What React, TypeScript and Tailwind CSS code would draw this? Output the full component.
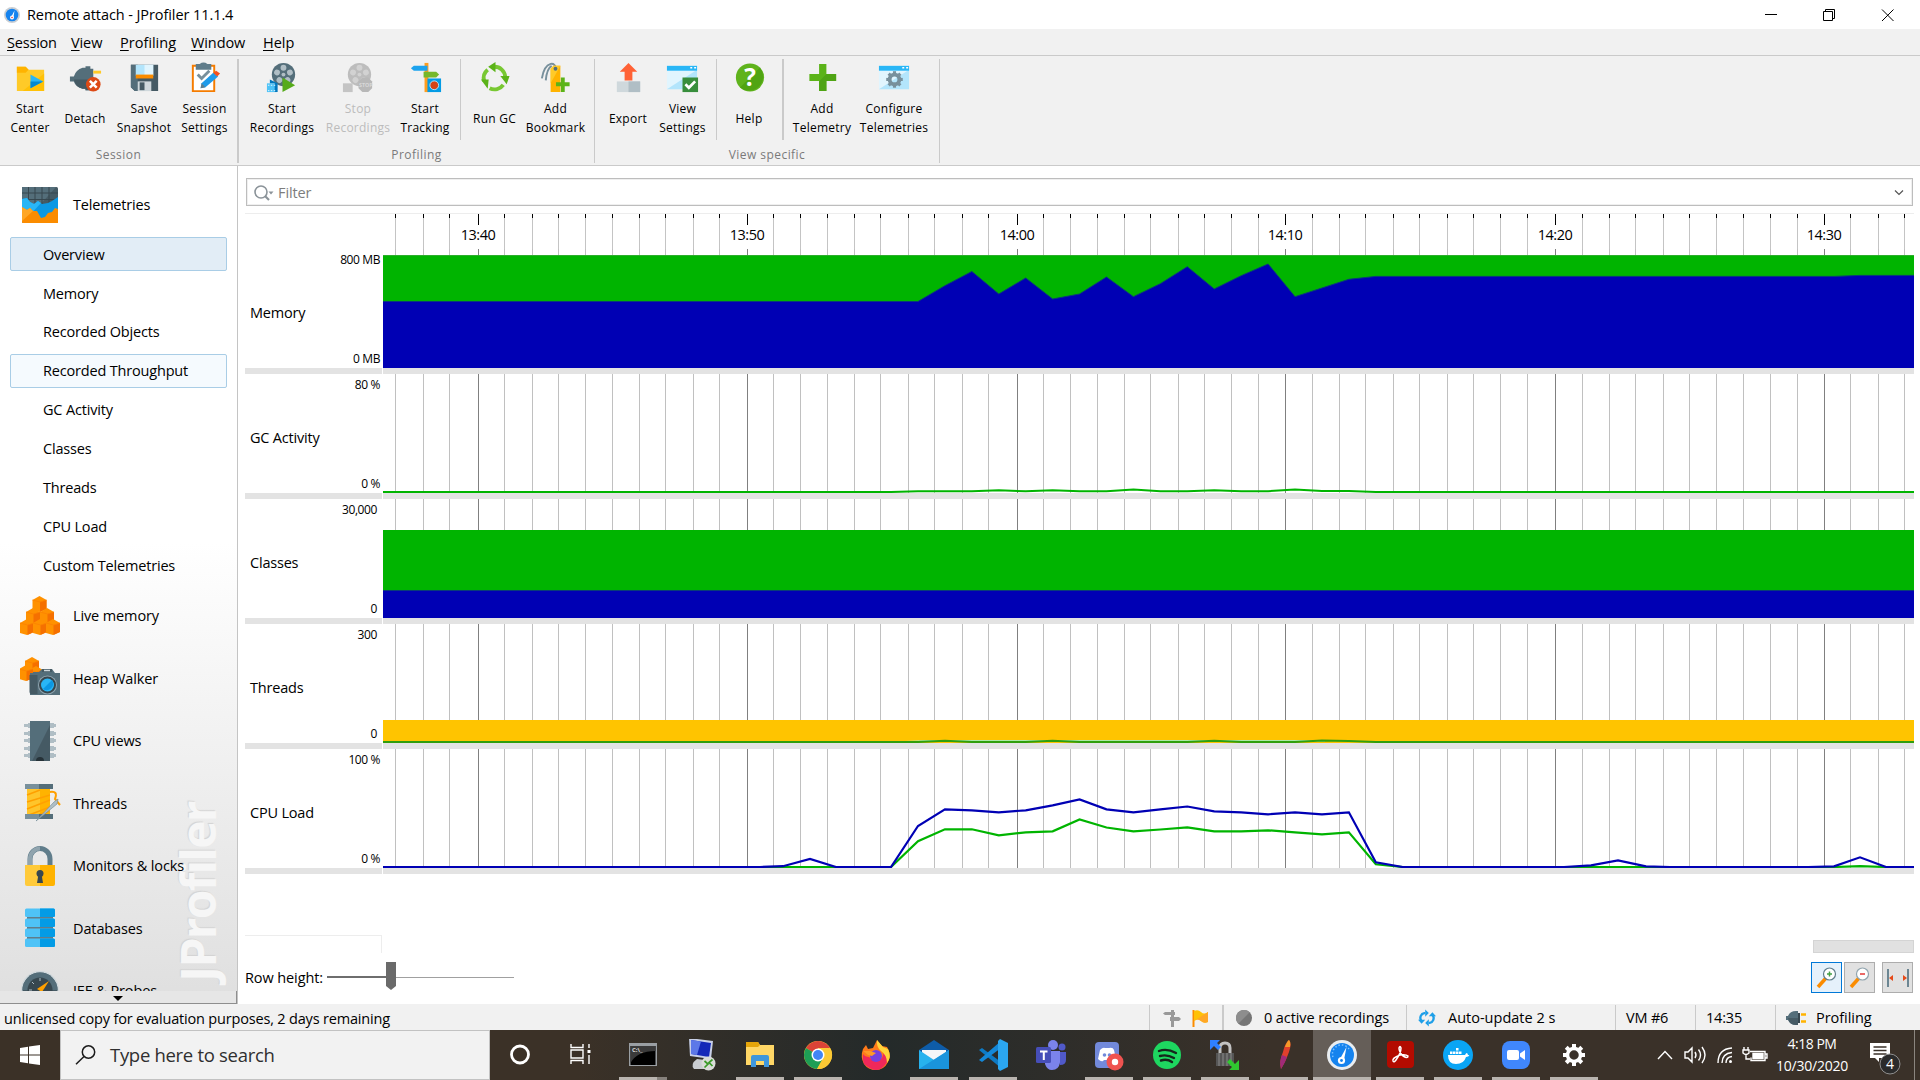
import React from "react";

type Pt = [number, number];

const GRID = [
  395, 423, 449, 478, 504, 532, 558, 585, 612, 639, 665, 693, 719, 747, 773, 800, 827, 854, 880, 908, 934, 962, 988,
  1017, 1043, 1070, 1097, 1124, 1150, 1178, 1204, 1231, 1258, 1285, 1312, 1339, 1365, 1393, 1419, 1447, 1473, 1500,
  1527, 1555, 1582, 1609, 1635, 1663, 1689, 1716, 1743, 1770, 1797, 1824, 1850, 1878, 1904,
];
const MAJOR: Record<number, string> = {
  478: "13:40",
  747: "13:50",
  1017: "14:00",
  1285: "14:10",
  1555: "14:20",
  1824: "14:30",
};

/** x coordinate of the i-th sample, counted from the start of the load phase */
const sx = (i: number) => 918 + 26.93 * i;
const line = (pts: Pt[]) => pts.map((p) => p.join(",")).join(" ");
const samples = (ys: number[], from = 0): Pt[] => ys.map((y, i) => [sx(from + i), y]);

const memory: Pt[] = [
  [383, 301.5],
  ...samples([301.5, 285.7, 271.5, 294, 278, 299, 294, 277, 296.7, 283.7, 266.7, 289, 275.7, 264, 296.7, 288, 279.3, 276.4]),
  [1834, 276.4],
  [1860, 275.4],
  [1914, 275.4],
];
const gc: Pt[] = [
  [383, 492],
  [891, 492],
  ...samples([491.2, 491.2, 491.2, 490.2, 491.3, 490.3, 491.3, 491.3, 489.5, 491.2, 491.2, 490.3, 491.2, 491.2, 489.4, 491, 491, 492]),
  [1914, 492],
];
const netIo: Pt[] = [[905, 741.5], [925, 740.6], [1305, 740.6], [1325, 741.5]];
const threads: Pt[] = [
  [383, 742],
  [891, 742],
  ...samples([742, 740.8, 742, 742, 742, 740.8, 742, 742, 742, 742, 742, 740.8, 742, 742, 742, 740.6, 741, 742]),
  [1914, 742],
];
const cpuBlue: Pt[] = [
  [383, 867],
  [760, 867],
  [783, 866.2],
  [810, 859],
  [836, 867],
  [891, 867],
  ...samples([826, 809.3, 810.3, 812.3, 810.3, 805.3, 799.5, 809.3, 812.3, 809.3, 806.5, 811.3, 812.3, 814.3, 812.3, 814.3, 812.3, 862.3, 867]),
  [1564, 867],
  [1591, 865.3],
  [1618, 860.3],
  [1646, 866.3],
  [1670, 867],
  [1808, 867],
  [1834, 866.3],
  [1860, 857.3],
  [1886, 867],
  [1914, 867],
];
const cpuGreen: Pt[] = [
  [383, 867],
  [891, 867],
  ...samples([841.3, 829.3, 829.3, 835.3, 832.3, 831.3, 819.5, 827.5, 831.3, 829.5, 827.3, 831.3, 831.3, 830.3, 832.3, 834.3, 832.3, 864.3, 867]),
  [1834, 867],
  [1860, 866.2],
  [1886, 867],
  [1914, 867],
];

function Grid({ y }: { y: number }) {
  return (
    <g shapeRendering="crispEdges">
      {GRID.map((x) => (
        <rect key={x} x={x} y={y} width={1} height={119} fill={MAJOR[x] ? "#808080" : "#c0c0c0"} />
      ))}
    </g>
  );
}

function Row({ name, max, min, y, num, children }: { name: string; max: string; min: string; y: number; num?: boolean; children: React.ReactNode }) {
  return (
    <div className="flex h-[125px]">
      <div className="mr-px flex w-[137px] flex-col border-b-[6px] border-[#e3e3e3]">
        <div className="flex h-full items-stretch justify-between pl-[5px]">
          <span className="self-center pt-[9px] text-[14.5px] leading-5 tracking-[-0.2px]">{name}</span>
          <span className={`flex flex-col justify-between whitespace-nowrap pt-[2px] text-right text-[12px] leading-[18px] tracking-[-0.4px] ${num ? "pr-[5px]" : "pr-[2px]"}`}>
            <span>{max}</span>
            <span>{min}</span>
          </span>
        </div>
      </div>
      <div className="w-[1531px] border-b-[6px] border-[#e3e3e3]">
        <svg className="block h-[119px] w-[1531px]" viewBox={`383 ${y} 1531 119`}>
          <Grid y={y} />
          {children}
        </svg>
      </div>
    </div>
  );
}

/* ---------- ribbon ---------- */

function Ribbon({ w, lines, off, children }: { w: string; lines: string[]; off?: boolean; children: React.ReactNode }) {
  return (
    <div className={`flex shrink-0 flex-col items-center ${w} ${off ? "text-[#bcbcbc]" : "text-black"}`}>
      <svg className="block h-[35px] w-[35px]" viewBox="0 0 36 36">
        {children}
      </svg>
      <div className="flex h-[46px] flex-col justify-center whitespace-nowrap text-center text-[12px] leading-[19px] tracking-[0.25px]">
        {lines.map((l) => (
          <div key={l}>{l}</div>
        ))}
      </div>
    </div>
  );
}

const Sep = ({ c }: { c: string }) => <div className={`shrink-0 bg-[#cacaca] ${c}`} />;

function Reel({ c, d }: { c: string; d: string }) {
  return (
    <>
      <circle cx="19" cy="15" r="12" fill={c} />
      {[0, 72, 144, 216, 288].map((a) => (
        <circle key={a} cx="19" cy="8" r="3" fill={d} transform={`rotate(${a} 19 15)`} />
      ))}
      <circle cx="19" cy="15" r="2" fill={d} />
    </>
  );
}

function WindowIcon() {
  return (
    <>
      <rect x="2" y="6" width="31" height="24" fill="#e1f5fe" />
      <path d="M33 10V30H2Z" fill="#b3e5fc" />
      <rect x="2" y="6" width="31" height="5" fill="#29b6f6" />
      <path d="M26 8h2M30 8h2" stroke="#fff" strokeWidth="1.6" />
    </>
  );
}

/* ---------- side bar ---------- */

function Cube({ x, y }: { x: number; y: number }) {
  return (
    <g transform={`translate(${x} ${y})`}>
      <path d="M0 4 7 0l7 4v9l-7 3-7-2z" fill="#ff9100" />
      <path d="M7.500 6 14 4v9l-6.500 3z" fill="#f57000" />
      <path d="M0 4l7.500 2L14 4" stroke="#fb8200" strokeWidth="0.800" fill="none" />
    </g>
  );
}

function Section({ label, children }: { label: string; children: React.ReactNode }) {
  return (
    <div className="flex h-[62.5px] shrink-0 items-center pl-[20px]">
      <svg className="h-[42px] w-[42px]" viewBox="0 0 42 42">
        {children}
      </svg>
      <span className="ml-[11px] whitespace-nowrap pt-[1px] text-[14.5px] leading-5 tracking-[-0.12px]">{label}</span>
    </div>
  );
}

const views = ["Overview", "Memory", "Recorded Objects", "Recorded Throughput", "GC Activity", "Classes", "Threads", "CPU Load", "Custom Telemetries"];

function SideBar() {
  return (
    <aside className="relative flex w-[238px] flex-col border-r border-[#c4c4c4] bg-linear-to-b from-white from-45% to-[#dfdfdf]">
      <div className="absolute bottom-[16px] left-[170px] flex h-[192px] w-[56px] items-center justify-center">
        <span className="-rotate-90 whitespace-nowrap text-[48px] font-bold leading-none tracking-[-1.8px] text-[#f6f6f6] [text-shadow:1px_-1px_1px_#d3d3d3]">JProfiler</span>
      </div>
      <div className="relative flex h-[825px] flex-col overflow-hidden">
        <div className="mt-[7px] flex h-[64px] shrink-0 items-center pl-[22px]">
          <svg className="h-9 w-9" viewBox="0 0 36 36">
            <rect width="36" height="36" rx="1.500" fill="#455a64" />
            <path d="M0 0H34L18 18H0Z" fill="#546e7a" />
            <path d="M0 6h36M0 12.500h36M6.500 0v20M13 0v20M20 0v20M27 0v20" stroke="#37474f" />
            <path d="M0 12l5-1 3 4 4 2 4-3 4 3 6-1 4-2 6-4v25H0z" fill="#0c98e4" />
            <path d="M0 12l5-1 3 4 4 2 4-3 3 2L7 29H0z" fill="#29b6f6" />
            <path d="M0 20l5 3 3-2 3 3 4 0 4 7 4-1 3-4 4-1 3-4 3 1v13.500q0 1.500-1.500 1.500h-33Q0 36 0 34.500z" fill="#fb8c00" />
            <path d="M0 20l5 3 3-2 3 3L0 34z" fill="#ffa726" />
          </svg>
          <span className="ml-[15px] text-[14.5px] leading-5 tracking-[-0.2px]">Telemetries</span>
        </div>
        <div className="flex shrink-0 flex-col gap-[4.9px] px-[10px]">
          {views.map((v, i) => (
            <div
              key={v}
              className={`flex h-[34px] items-center whitespace-nowrap rounded-[2px] border pl-[32px] pt-[1px] text-[14.5px] tracking-[-0.18px] ${
                i === 0 ? "border-[#a9cde6] bg-[#e2edf6]" : i === 3 ? "border-[#a9cde6] bg-[#f5fafe]" : "border-transparent"
              }`}
            >
              {v}
            </div>
          ))}
        </div>
        <div className="h-[2.5px] shrink-0" />
        <Section label="Live memory">
          <Cube x={12.500} y={1} />
          <Cube x={6} y={13} />
          <Cube x={20} y={13} />
          <Cube x={0} y={24} />
          <Cube x={13} y={24} />
          <Cube x={26} y={24} />
        </Section>
        <Section label="Heap Walker">
          <Cube x={5} y={0} />
          <Cube x={9} y={9} />
          <Cube x={-1} y={8} />
          <path d="M10 16h3v-1h6l3-3h10l3 4h5v22H10z" fill="#546e7a" />
          <path d="M22 12h10v3H22z" fill="#455a64" />
          <path d="M24 13.500h6" stroke="#cfd8dc" strokeWidth="1.500" />
          <path d="M9.500 18h8v19h-6q-2 0-2-2z" fill="#455a64" />
          <circle cx="27.500" cy="28" r="9.500" fill="#90a4ae" />
          <circle cx="27.500" cy="28" r="8.500" fill="#37474f" />
          <circle cx="27.500" cy="28" r="6.500" fill="#29b6f6" />
          <path d="M32 23a6.500 6.500 0 0 1-9 9z" fill="#0c98e4" />
        </Section>
        <Section label="CPU views">
          {[4, 12, 19, 27, 34].map((y) => (
            <path key={y} d={`M4 ${y}h4v-1h26v1h2v3h-2v1H8v-1H4z`} fill="#b0bec5" />
          ))}
          <rect x="10" y="1" width="20" height="40" fill="#546e7a" />
          <path d="M30 5v36H12z" fill="#455a64" />
          <path d="M16 41a4 4 0 0 1 8 0z" fill="#263238" />
        </Section>
        <Section label="Threads">
          <path d="M7 6h23v29H7z" fill="#ffc52b" />
          <path d="M20 6h10v29H20z" fill="#ffb300" />
          <path d="M7 13l13-5M7 20l23-7M7 27l23-9M9 33l21-8M15 34l14-5" stroke="#ffa000" strokeWidth="1.500" />
          <path d="M5 2h28v5H5z" fill="#78909c" />
          <path d="M19 2h14v5H19zM19 32h14v5H19z" fill="#546e7a" />
          <path d="M5 32h14v5H5z" fill="#78909c" />
          <path d="M30 10c8-1 6 4 5 7l5 6" stroke="#ffa000" strokeWidth="2" fill="none" />
          <path d="M16 39L34 20l4-3-1 5z" fill="#b0bec5" stroke="#78909c" strokeWidth="0.700" />
        </Section>
        <Section label="Monitors & locks">
          <path d="M10 22V14a10 10.500 0 0 1 20 0v8" stroke="#607d8b" strokeWidth="5" fill="none" />
          <path d="M10 22V14a10 10.500 0 0 1 10-10.500" stroke="#90a4ae" strokeWidth="4" fill="none" />
          <path d="M5 20h15v21H7q-2 0-2-2z" fill="#ffca3a" />
          <path d="M20 20h15v19q0 2-2 2H20z" fill="#ffb300" />
          <circle cx="20" cy="28.500" r="3.500" fill="#37474f" />
          <path d="M18.500 29h3l1.500 9h-6z" fill="#37474f" />
        </Section>
        <Section label="Databases">
          <rect x="7" y="3" width="26" height="36" fill="#607d8b" />
          {[1.500, 11.500, 21.500, 31.500].map((y) => (
            <g key={y}>
              <rect x="5" y={y} width="30" height="8.500" rx="1.500" fill="#4fc3f7" />
              <path d={`M20 ${y}h13.500q1.500 0 1.500 1.500v5.500q0 1.500-1.500 1.500H20z`} fill="#039be5" />
            </g>
          ))}
        </Section>
        <Section label="JEE & Probes">
          <circle cx="20" cy="20" r="19" fill="#cfd8dc" />
          <circle cx="20" cy="20" r="17.500" fill="#455a64" />
          <path d="M2.500 20a17.500 17.500 0 0 1 35 0z" fill="#546e7a" />
          <circle cx="20" cy="20" r="12.500" fill="#37474f" />
          <path d="M9 20h3M20 8v3M12 12l2 2" stroke="#b0bec5" />
          <path d="M17 19l12-8-7 11z" fill="#ffa000" />
        </Section>
      </div>
      <div className="flex h-[13px] w-[237px] items-center justify-center border-b border-r border-[#8e8e8e] bg-[#e6e6e6]">
        <svg className="mt-1 h-[6px] w-[10px]" viewBox="0 0 10 6">
          <path d="M0 0h10L5 5z" fill="#000" />
        </svg>
      </div>
    </aside>
  );
}

function ToolButton({ on, children }: { on?: boolean; children: React.ReactNode }) {
  return (
    <div className={`flex h-[31px] w-[31px] items-center justify-center border ${on ? "border-[#0078d7] bg-[#e5f1fb]" : "border-[#adadad] bg-[#e1e1e1]"}`}>
      <svg className="h-6 w-6 shrink-0" viewBox="0 0 24 24">
        {children}
      </svg>
    </div>
  );
}

/* ---------- task bar ---------- */

function Task({ run, active, more, children }: { run?: boolean; active?: boolean; more?: boolean; children: React.ReactNode }) {
  return (
    <div className={`flex h-[50px] w-[58.2px] shrink-0 flex-col items-center justify-end ${active ? "bg-[#655e58]" : ""}`}>
      <svg className="mb-[6px] h-[32px] w-[32px]" viewBox="0 0 32 32">
        {children}
      </svg>
      <div className={`flex h-[3px] ${active ? "w-full" : "w-[48px]"} ${run || active ? "bg-[#b9b4af]" : ""} justify-end`}>{more && <div className="h-[3px] w-[10px] bg-[#86817c]" />}</div>
    </div>
  );
}

const gearTeeth = [0, 45, 90, 135, 180, 225, 270, 315];

export default function App() {
  return (
    <div className="flex h-[1080px] w-[1920px] flex-col overflow-hidden bg-white font-['Open_Sans','Noto_Sans',sans-serif] text-black">
      {/* title bar */}
      <header className="flex h-[29px] shrink-0 items-center pl-[4px]">
        <svg className="h-4 w-4" viewBox="0 0 16 16">
          <circle cx="8" cy="8" r="8" fill="#c9ced3" />
          <circle cx="8" cy="8" r="6.300" fill="#1583ee" />
          <path d="M10.500 3.500 9.500 10l-2.500.5z" fill="#fff" />
          <circle cx="8" cy="10.500" r="2" fill="#fff" />
          <circle cx="8" cy="10.500" r="0.800" fill="#e53935" />
        </svg>
        <span className="ml-[7px] text-[14.5px] tracking-[-0.08px]">Remote attach - JProfiler 11.1.4</span>
        <svg className="ml-auto mr-[24px] h-[14px] w-[132px]" viewBox="0 0 132 14" fill="none" stroke="#000">
          <path d="M1 6.500h12" />
          <path d="M59.500 3.500h9v9h-9zM61.500 3.500v-2h9v9h-2" />
          <path d="M118 1.500l11.500 11.500M129.500 1.500L118 13" />
        </svg>
      </header>

      {/* menu */}
      <nav className="flex h-[27px] shrink-0 items-center border-b border-[#cacaca] bg-[#f1f1f1] pt-[1px] text-[14.5px]">
        <span className="w-[64px] pl-[7px] tracking-[-0.2px]"><u className="underline-offset-2">S</u>ession</span>
        <span className="w-[49px] pl-[7px] tracking-[-0.1px]"><u className="underline-offset-2">V</u>iew</span>
        <span className="w-[71px] pl-[7px] tracking-[0px]"><u className="underline-offset-2">P</u>rofiling</span>
        <span className="w-[72px] pl-[7px] tracking-[-0.1px]"><u className="underline-offset-2">W</u>indow</span>
        <span className="pl-[7px] tracking-[0px]"><u className="underline-offset-2">H</u>elp</span>
      </nav>

      {/* ribbon */}
      <div className="flex h-[110px] shrink-0 border-b border-[#cacaca] bg-[#f1f1f1] pt-[3px]">
        <div className="flex w-[237px] flex-col">
          <div className="flex pt-[1px]">
            <Ribbon w="w-[60px]" lines={["Start", "Center"]}>
              <path d="M4 7h9l3 3h16v22H4z" fill="#ffca28" />
              <path d="M4 7h9l3 3-3 3H4z" fill="#ffb300" />
              <path d="M32 14v18H10z" fill="#ffc107" />
              <path d="M18 15v14l13-7z" fill="#29b6f6" />
              <path d="M18 22v7l13-7z" fill="#0288d1" />
            </Ribbon>
            <Ribbon w="w-[50px]" lines={["Detach"]}>
              <path d="M2 17h4q2-7 9-9h3V6.500h5V9h3v21h-3v1h-5v-1.500h-3Q8 28 6 22H2z" fill="#546e7a" />
              <path d="M6 20h20v10h-3v1h-5v-1.500h-3Q8 28 6 20z" fill="#455a64" />
              <path d="M26 12.500h8" stroke="#ffca28" strokeWidth="3" />
              <circle cx="26" cy="25" r="7.500" fill="#dd4a16" />
              <path d="M22.500 21.500l7 7m0-7l-7 7" stroke="#fff" strokeWidth="2.600" />
            </Ribbon>
            <Ribbon w="w-[68px]" lines={["Save", "Snapshot"]}>
              <path d="M4 5h28v27H8l-4-4z" fill="#455a64" />
              <path d="M4 5h7v27H8l-4-4z" fill="#546e7a" />
              <path d="M9 5h18v11H9z" fill="#b3e5fc" />
              <path d="M18 5h9v11h-9z" fill="#e1f5fe" />
              <path d="M9 15h18v4H9z" fill="#fb8c00" />
              <path d="M11 22h14v10H11z" fill="#cfd8dc" />
              <path d="M13 23h5v8h-5z" fill="#455a64" />
            </Ribbon>
            <Ribbon w="w-[53px]" lines={["Session", "Settings"]}>
              <path d="M6 6h22v26H6z" fill="#fff" stroke="#f57c00" strokeWidth="2" />
              <path d="M9 4h4q4-3 8 0h4v6H9z" fill="#607d8b" />
              <path d="M11 15l4 4 8-8" stroke="#78909c" strokeWidth="3" fill="none" />
              <path d="M15 24L27 13l5 4-13 11-5 1z" fill="#1e9bea" />
              <path d="M27 13l3-2 4 3-3 3z" fill="#f4511e" />
              <path d="M14 29l1-5 4 4z" fill="#607d8b" />
            </Ribbon>
          </div>
          <div className="mt-[6px] text-center text-[12px] leading-[16px] tracking-[0.45px] text-[#7a7a7a]">Session</div>
        </div>
        <Sep c="h-[104px] w-[2px]" />
        <div className="flex w-[355px] flex-col">
          <div className="flex pl-[5px]">
            <div className="flex pt-[1px]">
              <Ribbon w="w-[76px]" lines={["Start", "Recordings"]}>
                <Reel c="#546e7a" d="#b0bec5" />
                <path d="M2 24h10v9H2z" fill="#4fc3f7" />
                <path d="M5 20l8 4v9h-3v-9H5z" fill="#0277bd" />
                <path d="M3 26h9M3 31.500h9" stroke="#e1f5fe" strokeDasharray="1.500 1.500" />
                <path d="M18 18v15l13-7z" fill="#56ab1a" />
              </Ribbon>
              <Ribbon w="w-[76px]" lines={["Stop", "Recordings"]} off>
                <Reel c="#bdbdbd" d="#d2d2d2" />
                <path d="M2 24h10v9H2z" fill="#c4c4c4" />
                <path d="M22 18h6l4 4v7l-4 4h-6l-4-4v-7z" fill="#b8b8b8" />
                <text x="18.500" y="28" fontSize="5.500" fontWeight="700" fill="#d8d8d8">STOP</text>
              </Ribbon>
              <Ribbon w="w-[58px]" lines={["Start", "Tracking"]}>
                <path d="M17 3h4v30h-4z" fill="#ff9d1e" />
                <path d="M6 6h14v5H6L3 8.500z" fill="#1da3ee" />
                <path d="M16 12h13l3 3-3 3H16z" fill="#76b82a" />
                <rect x="20" y="19" width="14" height="14" fill="#039be5" />
                <circle cx="27" cy="26" r="4.500" fill="#d84315" stroke="#b3e5fc" />
              </Ribbon>
            </div>
            <div className="w-[6px] shrink-0" />
            <Sep c="h-[81px] w-px" />
            <div className="flex pl-[5px] pt-[1px]">
              <Ribbon w="w-[57px]" lines={["Run GC"]}>
                <g fill="none" stroke="#78c832" strokeWidth="4">
                  <path d="M18 7a11 11 0 0 1 11 10" />
                  <path d="M27 25.500a11 11 0 0 1-14 3.500" />
                  <path d="M7.500 22A11 11 0 0 1 11 10" />
                </g>
                <path d="M19 2v10.500L11.500 7z" fill="#5bb318" />
                <path d="M24 16.500h9.500L30.500 25z" fill="#5bb318" />
                <path d="M4 20l8 0-1 9.500z" fill="#5bb318" />
              </Ribbon>
              <Ribbon w="w-[65px]" lines={["Add", "Bookmark"]}>
                <path d="M4 19q2-13 9-15 4-1 6 5M8 21q1-12 6-15" stroke="#78909c" strokeWidth="2" fill="none" />
                <path d="M13 9l3-3h7v27H13z" fill="#ffb300" />
                <path d="M13 9l3-3h7L13 24z" fill="#ffca28" />
                <circle cx="18" cy="9" r="2" fill="#546e7a" />
                <path d="M23.500 18h4v5h5v4h-5v6h-4v-6h-5v-4h5z" fill="#5bb318" />
              </Ribbon>
            </div>
          </div>
          <div className="mt-[6px] text-center text-[12px] leading-[16px] tracking-[0.45px] text-[#7a7a7a]">Profiling</div>
        </div>
        <Sep c="h-[104px] w-px" />
        <div className="flex w-[344px] flex-col">
          <div className="flex pl-[5px]">
            <div className="flex pt-[1px]">
              <Ribbon w="w-[56px]" lines={["Export"]}>
                <path d="M6 22h24v11H6z" fill="#cfd8dc" />
                <path d="M18 22h12v11H18z" fill="#b0bec5" />
                <path d="M18 3l9 9h-5v9h-8v-9H9z" fill="#ff6236" />
              </Ribbon>
              <Ribbon w="w-[53px]" lines={["View", "Settings"]}>
                <WindowIcon />
                <rect x="18" y="18" width="16" height="15" fill="#388e3c" />
                <path d="M21 25l3.500 3.500L31 22" stroke="#fff" strokeWidth="2.800" fill="none" />
              </Ribbon>
            </div>
            <div className="w-[7px] shrink-0" />
            <Sep c="h-[81px] w-px" />
            <div className="flex pl-[5px] pt-[1px]">
              <Ribbon w="w-[54px]" lines={["Help"]}>
                <circle cx="18.500" cy="18" r="14.500" fill="#5fb31c" />
                <path d="M28.700 7.800a14.500 14.500 0 0 1-20.400 20.400z" fill="#50a412" />
                <text x="18.500" y="27" textAnchor="middle" fontSize="25" fontWeight="700" fill="#fff">?</text>
              </Ribbon>
            </div>
            <div className="w-[6px] shrink-0" />
            <Sep c="h-[81px] w-[2px]" />
            <div className="flex pl-[5px] pt-[1px]">
              <Ribbon w="w-[66px]" lines={["Add", "Telemetry"]}>
                <path d="M14.500 4h7.500v10.500H32v7H22v10.500h-7.500V21.500H4.500v-7h10z" fill="#5bb318" />
                <path d="M22 14.500H32v7H22v10.500h-7.500V22z" fill="#4fa414" />
              </Ribbon>
              <Ribbon w="w-[78px]" lines={["Configure", "Telemetries"]}>
                <WindowIcon />
                <circle cx="18" cy="20" r="5" fill="none" stroke="#78909c" strokeWidth="4" />
                {gearTeeth.map((a) => (
                  <rect key={a} x="16.400" y="11.500" width="3.200" height="4" fill="#78909c" transform={`rotate(${a} 18 20)`} />
                ))}
              </Ribbon>
            </div>
          </div>
          <div className="mt-[6px] text-center text-[12px] leading-[16px] tracking-[0.45px] text-[#7a7a7a]">View specific</div>
        </div>
        <Sep c="h-[104px] w-px" />
      </div>

      {/* body */}
      <div className="flex h-[838px] shrink-0">
        <SideBar />
        <main className="flex w-[1682px] flex-col pl-[7px]">
          <div className="ml-px mt-[12px] flex h-[28px] w-[1667px] items-center border border-[#bdbdbd] pl-[6px] pr-[8px] pt-[1px] shadow-[inset_0_0_0_1px_#efefef]">
            <svg className="h-[18px] w-[22px]" viewBox="0 0 22 18" fill="none" stroke="#8b9399" strokeWidth="1.600">
              <circle cx="8" cy="8" r="6" />
              <path d="M12 12l4 4" strokeWidth="2.200" />
              <path d="M15.500 7.500h5l-2.500 3z" fill="#8b9399" stroke="none" />
            </svg>
            <span className="ml-[3px] text-[14.5px] tracking-[-0.1px] text-[#7d7d7d]">Filter</span>
            <svg className="ml-auto h-[8px] w-[10px]" viewBox="0 0 10 8">
              <path d="M1 1.500l4 4 4-4" stroke="#555" strokeWidth="1.200" fill="none" />
            </svg>
          </div>
          <div className="mt-[7px] h-px w-[1669px] bg-[#ededed]" />
          <svg className="ml-[138px] block h-[35px] w-[1531px] shrink-0" viewBox="383 214 1531 35">
            {GRID.map((x) => (
              <g key={x} shapeRendering="crispEdges">
                <rect x={x} y={214} width={1} height={MAJOR[x] ? 11 : 4} fill="#000" />
                {!MAJOR[x] && <rect x={x} y={218} width={1} height={31} fill="#c4c4c4" />}
              </g>
            ))}
            {Object.entries(MAJOR).map(([x, t]) => (
              <text key={t} x={Number(x)} y={240} textAnchor="middle" fontSize="14.500" letterSpacing="-0.500">
                {t}
              </text>
            ))}
          </svg>

          <Row name="Memory" max="800 MB" min="0 MB" y={249}>
            <rect x="383" y="255" width="1531" height="113" fill="#00b400" />
            <rect x="383" y="255" width="1531" height="1" fill="#2cae2c" />
            <polygon points={`${line(memory)} 1914,368 383,368`} fill="#0000b4" />
            <polyline points={line(memory)} fill="none" stroke="#0a3c78" strokeWidth="1" />
          </Row>
          <Row name="GC Activity" max="80 %" min="0 %" y={374}>
            <polyline points={line(gc)} fill="none" stroke="#00b400" strokeWidth="2" />
          </Row>
          <Row name="Classes" max="30,000" min="0" y={499} num>
            <rect x="383" y="530" width="1531" height="60" fill="#00b400" />
            <rect x="383" y="590" width="1531" height="28" fill="#0000b4" />
            <rect x="383" y="590" width="1531" height="1" fill="#0a3c78" />
          </Row>
          <Row name="Threads" max="300" min="0" y={624} num>
            <rect x="383" y="720" width="1531" height="23" fill="#ffc400" />
            <polyline points={line(netIo)} fill="none" stroke="#a4eeb4" strokeWidth="1" />
            <polyline points={line(threads)} fill="none" stroke="#2f9e0c" strokeWidth="2" />
          </Row>
          <Row name="CPU Load" max="100 %" min="0 %" y={749}>
            <polyline points={line(cpuGreen)} fill="none" stroke="#00b400" strokeWidth="2.200" />
            <polyline points={line(cpuBlue)} fill="none" stroke="#0000b4" strokeWidth="2.200" />
          </Row>

          <div className="mt-[61px] flex w-[1669px] items-end justify-between">
            <div className="h-[18px] w-[137px] border-r border-t border-[#ededed]" />
            <div className="h-[13px] w-[101px] border border-[#d4d4d4] bg-[#e1e1e1]" />
          </div>
          <div className="mt-[9px] flex h-[31px] w-[1669px] items-center">
            <span className="w-[82px] whitespace-nowrap text-[14.5px] leading-5 tracking-[-0.1px]">Row height:</span>
            <svg className="h-[31px] w-[188px]" viewBox="0 0 188 31">
              <path d="M0 15h60" stroke="#6e6e6e" strokeWidth="2" />
              <path d="M69 15.500h118" stroke="#a0a0a0" strokeWidth="1" />
              <path d="M59 0h10v24l-5 4-5-4z" fill="#6a6a6a" />
            </svg>
            <div className="ml-auto mr-px flex">
              <ToolButton on>
                <path d="M3 21L11 12" stroke="#fb8c00" strokeWidth="3.500" />
                <circle cx="14.500" cy="8" r="6" fill="#fff" stroke="#607d8b" strokeWidth="1.200" />
                <path d="M12 8h5M14.500 5.500v5" stroke="#43a047" strokeWidth="1.500" />
              </ToolButton>
              <div className="w-[2px]" />
              <ToolButton>
                <path d="M3 21L11 12" stroke="#fb8c00" strokeWidth="3.500" />
                <circle cx="14.500" cy="8" r="6" fill="#fff" stroke="#90a4ae" strokeWidth="1.200" />
                <path d="M12 8h5" stroke="#e53935" strokeWidth="1.500" />
              </ToolButton>
              <div className="w-[7px]" />
              <ToolButton>
                <path d="M2 3v18M22 3v18" stroke="#607d8b" strokeWidth="1.800" />
                <path d="M3 12l4-3v6zM21 12l-4-3v6z" fill="#e64a19" />
              </ToolButton>
            </div>
          </div>
        </main>
      </div>

      {/* status bar */}
      <div className="flex h-[26px] shrink-0 items-center bg-[#f1f1f1] text-[14.5px] leading-5 tracking-[-0.18px]">
        <span className="w-[1149px] pl-[4px] pt-[3px]">unlicensed copy for evaluation purposes, 2 days remaining</span>
        <div className="flex h-[25px] w-[73px] items-center border-l border-[#cacaca] pl-[12px] pt-[1px]">
          <svg className="h-[18px] w-[52px]" viewBox="0 0 52 18">
            <path d="M9 1h3v17H9zM3 3h10v3H3L1 4.500zM8 8h9l2 2-2 2H8z" fill="#999" />
            <path d="M31.500 1v17" stroke="#fb8c00" strokeWidth="2" />
            <path d="M32 2q4-2 7 1t7 0v10q-4 2-7-1t-7 0z" fill="#ffc107" />
            <path d="M46 3v10q-4 2-7-1t-7 0z" fill="#ffa726" />
          </svg>
        </div>
        <div className="flex h-[25px] w-[184px] items-center border-l-2 border-[#cacaca] pl-[12px] pt-[2px]">
          <svg className="h-4 w-4" viewBox="0 0 16 16">
            <circle cx="8" cy="8" r="8" fill="#757575" />
            <path d="M2.300 13.700A8 8 0 0 1 13.700 2.300z" fill="#8d8d8d" />
          </svg>
          <span className="ml-[12px] whitespace-nowrap tracking-[-0.1px]">0 active recordings</span>
        </div>
        <div className="flex h-[25px] w-[209px] items-center border-l border-[#cacaca] pl-[9px] pt-[2px]">
          <svg className="h-[18px] w-[22px]" viewBox="0 0 22 20" fill="none" stroke="#1e9fe8" strokeWidth="2.600">
            <path d="M9 4.500H8A5 5.500 0 0 0 4.500 13" />
            <path d="M13 15.500h1A5 5.500 0 0 0 17.500 7" />
            <path d="M9 0.500v8l4-4zM13 11.500v8l-4-4z M1 12h8l-4 4.500z M13 8h8l-4-4.500z" fill="#1e9fe8" stroke="none" />
          </svg>
          <span className="ml-[10px] tracking-[0px]">Auto-update 2 s</span>
        </div>
        <div className="flex h-[25px] w-[80px] items-center border-l border-[#cacaca] pl-[10px] pt-[2px]">VM #6</div>
        <div className="flex h-[25px] w-[80px] items-center border-l border-[#cacaca] pl-[10px] pt-[2px]">14:35</div>
        <div className="flex h-[25px] items-center border-l border-[#cacaca] pl-[10px] pt-[2px]">
          <svg className="h-[16px] w-[20px]" viewBox="0 0 20 16">
            <path d="M0 6h2q2-5 8-5h2v14h-2q-6 0-8-5H0z" fill="#546e7a" />
            <path d="M2 8h10v7h-2Q3 15 2 8z" fill="#455a64" />
            <path d="M13 3v10" stroke="#37474f" strokeWidth="2" />
            <path d="M15 4.500h5M15 11.500h5" stroke="#ffb300" strokeWidth="2.500" />
          </svg>
          <span className="ml-[10px] tracking-[-0.05px]">Profiling</span>
        </div>
      </div>

      {/* task bar */}
      <footer className="flex h-[50px] shrink-0 bg-linear-to-r from-[#3b3127] from-30% via-[#242a2a] via-46% to-[#3a3129] to-66%">
        <div className="flex w-[60px] items-center justify-center">
          <svg className="h-[20px] w-[20px]" viewBox="0 0 20 20" fill="#fff">
            <path d="M0 3l8-1.200V9.500H0zM9 1.600L20 0v9.500H9zM0 10.500h8v7.700L0 17zM9 10.500h11V20L9 18.400z" />
          </svg>
        </div>
        <div className="flex w-[430px] items-center border border-[#c2c2c2] bg-[#f2f2f2] pl-[14px]">
          <svg className="h-[20px] w-[21px]" viewBox="0 0 21 20" fill="none" stroke="#1b1b1b" strokeWidth="1.500">
            <circle cx="13.500" cy="7" r="6.200" />
            <path d="M9 11.500L1 19.300" />
          </svg>
          <span className="ml-[14px] whitespace-nowrap text-[18.5px] tracking-[-0.3px] text-[#2f2f2f]">Type here to search</span>
        </div>
        <div className="w-px" />
        <Task>
          <circle cx="16" cy="15.500" r="8.500" fill="none" stroke="#fff" strokeWidth="2.800" />
        </Task>
        <div className="w-[2px]" />
        <Task>
          <path d="M7 5v3.500h12V5M7 25v-3.500h12V25M7 11h12v8H7zM25 5v4M25 16v9" fill="none" stroke="#fff" strokeWidth="1.400" />
          <path d="M23.500 11h3v3h-3z" fill="#fff" />
        </Task>
        <div className="w-[5px]" />
        <Task run more>
          <rect x="2" y="4" width="28" height="23" fill="#9a9fa3" />
          <rect x="3.500" y="7" width="25" height="19" fill="#000" />
          <path d="M3.500 7h25v5Q10 12 3.500 24z" fill="#3a3a3a" />
          <text x="5" y="13" fontSize="6" fontWeight="700" fill="#ddd">C:\_</text>
        </Task>
        <Task>
          <path d="M3 -1l24 3-2 18-21-3z" fill="#c8d0e8" />
          <path d="M5 1l20 3-2 14-18-3z" fill="#1428b8" />
          <path d="M5 1l10 1.500-4 13.500-6-.9z" fill="#5c78e8" />
          <path d="M11 20l8 1 4 9H8q-4-5 3-10z" fill="#c9ccd0" />
          <circle cx="22.500" cy="24.500" r="7" fill="#d9dcd8" />
          <path d="M18.500 22l3.500 3-3.500 3.500M26.500 20.500l-3.500 3 3.500 3.500" stroke="#3a9a28" strokeWidth="1.700" fill="none" />
        </Task>
        <Task run>
          <path d="M2 3h12l2 3h14v20H2z" fill="#ffd766" />
          <path d="M2 3h12l2 3-2 2H2z" fill="#e5a50a" />
          <path d="M7 28V18q0-2 2-2h14q2 0 2 2v10h-5v-6h-8v6z" fill="#3f97dc" />
        </Task>
        <Task run>
          <circle cx="16" cy="16" r="14" fill="#fcc934" />
          <path d="M16 16L3.900 9A14 14 0 0 1 28.100 9H16z" fill="#db4437" />
          <path d="M3.900 9A14 14 0 0 0 15 30l6-11-5-3z" fill="#1e9e55" />
          <path d="M16 16l12.100-7A14 14 0 0 1 15 30l7-11z" fill="#fcc934" />
          <circle cx="16" cy="16" r="6.500" fill="#fff" />
          <circle cx="16" cy="16" r="5" fill="#4285f4" />
        </Task>
        <Task>
          <path d="M3 10l3-4 2 4 5-1 4-8 5 6 5 1q5 8 1 15-4 8-12 8T4 25Q0 18 3 10z" fill="#ff7a1a" />
          <path d="M3 15q2 3 6 3 5 6 13 1l3-9q6 10 0 16-4 5-9 5T4 25Q2 20 3 15z" fill="#f0285a" />
          <path d="M17 1l6 7 5 2q4 8-1 14 0-8-6-12-5-4-4-11z" fill="#ffd43a" />
          <circle cx="16" cy="17" r="6" fill="#7540e0" />
          <path d="M3 12l7 0 6 2-4 3-4-1z" fill="#ff9a26" />
        </Task>
        <Task run>
          <path d="M1 11L16 1l15 10v5H1z" fill="#0e5ca8" />
          <path d="M4 11h24v8l-12 7-12-7z" fill="#f4f6f8" />
          <path d="M1 11l15 10L31 11v19H1z" fill="#27b2ee" />
          <path d="M1 30L31 11v19z" fill="#1a94dc" />
        </Task>
        <Task run>
          <path d="M2 11l3-2 19 14v6z" fill="#0e7ac4" />
          <path d="M2 21l3 2L24 9V2z" fill="#1488d8" />
          <path d="M23 0l8 4v24l-8 4-2-2V2z" fill="#2ba6f0" />
        </Task>
        <Task>
          <circle cx="18" cy="6" r="5" fill="#7b83eb" />
          <circle cx="27" cy="8" r="3.500" fill="#5059c9" />
          <path d="M20 13h11v8q0 5-6 5z" fill="#5059c9" />
          <path d="M10 12h15v11q-1 8-8 8-5 0-7-6z" fill="#7b83eb" />
          <rect x="1" y="8" width="15" height="16" rx="1.500" fill="#464eb8" />
          <path d="M5 12.500h7.500M8.800 12.500V21" stroke="#fff" strokeWidth="2" />
        </Task>
        <Task run>
          <rect x="2" y="3" width="24" height="26" rx="4" fill="#7289da" />
          <path d="M7 11q3-3 5-2h4q4-1 5 2l2 9q-3 3-5 2l-1-1h-6l-1 1q-2 1-5-2z" fill="#fff" />
          <circle cx="11.500" cy="16" r="1.800" fill="#7289da" />
          <circle cx="16.500" cy="16" r="1.800" fill="#7289da" />
          <circle cx="22" cy="23" r="8.500" fill="#ef5350" />
          <circle cx="22" cy="23" r="3.200" fill="#fff" />
        </Task>
        <Task run>
          <circle cx="16" cy="16" r="14" fill="#1ed760" />
          <path d="M8 12q8-3 17 2M9 17q7-2 14 2M10 21.500q6-2 11 1.500" stroke="#16261c" strokeWidth="2.400" fill="none" strokeLinecap="round" />
        </Task>
        <Task run>
          <path d="M11 15V9q0-5 5-5t5 5v6" stroke="#c2c2c2" strokeWidth="3" fill="none" />
          <rect x="7" y="14" width="18" height="13" fill="#565656" />
          <path d="M10 14v13M14 14v13M18 14v13M22 14v13" stroke="#8a8a8a" />
          <path d="M1 1h10L8 4l4 4-3 3-4-4-4 4z" fill="#2f80ff" />
          <path d="M30 31H20l3-3-5-5 3-3 5 5 4-4z" fill="#30c830" />
        </Task>
        <Task run>
          <path d="M13 30q-2-8 2-17 2-9 6-12 3 3 0 12-3 9-8 17z" fill="#e0402c" />
          <path d="M13 30q-2-8 1-14l5 2q-2 6-6 12z" fill="#a02a78" />
          <path d="M17 8q2-6 4-7 2 2 1 7z" fill="#f59a28" />
        </Task>
        <Task active>
          <circle cx="16" cy="16" r="15" fill="#e9edf0" />
          <circle cx="16" cy="16" r="12" fill="#1583ee" />
          <path d="M7 18a9 9 0 0 1 16-8" stroke="#7cc0ff" strokeWidth="1.500" fill="none" strokeDasharray="1.500 2" />
          <path d="M20.500 8l-2.500 13-4-1z" fill="#fff" />
          <circle cx="15.500" cy="21.500" r="3.600" fill="#fff" />
          <circle cx="15.500" cy="21.500" r="1.400" fill="#1583ee" />
        </Task>
        <Task run>
          <rect x="3" y="2" width="27" height="27" rx="4" fill="#b30b00" />
          <path d="M9 22q-1-3 7-6 6-1 8 1 0 3-5 0-4-4-4-8 1-3 2 0 0 5-5 12-2 3-3 1z" stroke="#fff" strokeWidth="1.500" fill="none" />
        </Task>
        <Task run>
          <circle cx="16" cy="16" r="15" fill="#0aa5f5" />
          <path d="M6 16h17q2-4 3 0 2 0 1 1-2 1-3 1-2 7-10 7-8 0-8-9z" fill="#fff" />
          <path d="M8 12.500h2.500v2.500H8zM11 12.500h2.500v2.500H11zM14 12.500h2.500v2.500H14zM17 12.500h2.500v2.500H17zM14 9h2.500v2.500H14z" fill="#fff" />
        </Task>
        <Task run>
          <rect x="2" y="2" width="28" height="28" rx="8" fill="#4087fc" />
          <rect x="7" y="11" width="12" height="10" rx="2" fill="#fff" />
          <path d="M20 14.500l5-3.500v10l-5-3.500z" fill="#fff" />
        </Task>
        <Task run>
          <circle cx="16" cy="16" r="6.500" fill="none" stroke="#fff" strokeWidth="3.500" />
          {gearTeeth.map((a) => (
            <rect key={a} x="14" y="5" width="4" height="5" fill="#fff" transform={`rotate(${a} 16 16)`} />
          ))}
        </Task>
        <div className="ml-auto flex items-center">
          <svg className="h-[26px] w-[112px]" viewBox="0 0 112 26" fill="none" stroke="#fff" strokeWidth="1.400">
            <path d="M2 17l7-7.500 7 7.500" />
            <path d="M29 10h3l4-4v14l-4-4h-3zM39 10q2 3 0 6M42.500 7.500q4 5.500 0 11M46 5q6 8 0 16" />
            <path d="M62 21Q62 7 76 6M66 21Q66 11.500 76 10.500M70 21q0-6 6-6.500" />
            <circle cx="74.500" cy="19.500" r="1.500" fill="#fff" stroke="none" />
            <path d="M94 9.500h15v9H95v-3M109 12h2v4h-2" />
            <path d="M97 11.500h10v5H97z" fill="#fff" />
            <path d="M88 5v3M92 5v3M87 8h6v3q-3 3-6 0zM90 12v5h4" />
          </svg>
          <div className="ml-[2px] flex w-[84px] flex-col items-center whitespace-nowrap text-[14px] leading-[22.500px] tracking-[-0.25px] text-white">
            <span className="tracking-[-0.5px]">4:18 PM</span>
            <span>10/30/2020</span>
          </div>
          <svg className="ml-[14px] mr-[10px] h-[42px] w-[36px]" viewBox="0 0 36 42">
            <path d="M2 9h20v15H11v4l-4-4H2z" fill="#fff" />
            <path d="M5.500 13h13M5.500 16.500h13M5.500 20h13" stroke="#3a3129" strokeWidth="1.400" />
            <circle cx="22" cy="30" r="10" fill="#2b2b2b" stroke="#8f8f8f" />
            <text x="22" y="35" textAnchor="middle" fontSize="14" fill="#fff">4</text>
          </svg>
          <div className="h-[50px] w-px bg-[#8a857f]" />
          <div className="w-[5px]" />
        </div>
      </footer>
    </div>
  );
}
